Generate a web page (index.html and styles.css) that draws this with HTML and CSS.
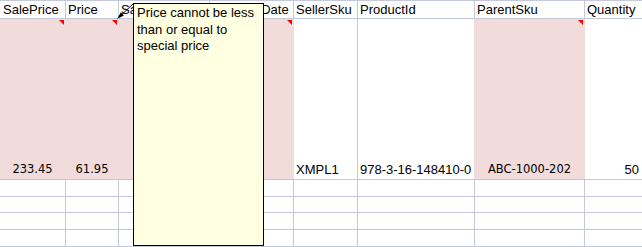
FILE: index.html
```html
<!DOCTYPE html>
<html>
<head>
<meta charset="utf-8">
<link rel="stylesheet" href="styles.css">
</head>
<body>
<div class="sheet">
  <div class="grid">
    <div class="c h first">SalePrice</div>
    <div class="c h">Price</div>
    <div class="c h">SaleStartDate</div>
    <div class="c h">SaleEndDate</div>
    <div class="c h">SellerSku</div>
    <div class="c h">ProductId</div>
    <div class="c h">ParentSku</div>
    <div class="c h">Quantity</div>

    <div class="c d pink center tahoma note">233.45</div>
    <div class="c d pink center tahoma note">61.95</div>
    <div class="c d pink"></div>
    <div class="c d pink note"></div>
    <div class="c d">XMPL1</div>
    <div class="c d">978-3-16-148410-0</div>
    <div class="c d pink center tahoma note">ABC-1000-202</div>
    <div class="c d right">50</div>

    <div class="c"></div><div class="c"></div><div class="c"></div><div class="c"></div><div class="c"></div><div class="c"></div><div class="c"></div><div class="c"></div>
    <div class="c"></div><div class="c"></div><div class="c"></div><div class="c"></div><div class="c"></div><div class="c"></div><div class="c"></div><div class="c"></div>
    <div class="c"></div><div class="c"></div><div class="c"></div><div class="c"></div><div class="c"></div><div class="c"></div><div class="c"></div><div class="c"></div>
    <div class="c"></div><div class="c"></div><div class="c"></div><div class="c"></div><div class="c"></div><div class="c"></div><div class="c"></div><div class="c"></div>
  </div>

  <svg class="arrow" width="20" height="20" viewBox="0 0 20 20">
    <line x1="17" y1="1" x2="4.5" y2="12.8" stroke="#000" stroke-width="1"/>
    <polygon points="1,16 7.9,12.4 4.9,9.2" fill="#000"/>
  </svg>

  <div class="comment">Price cannot be less than or equal to special price</div>
</div>
</body>
</html>
```

FILE: styles.css
```css
html, body {
  margin: 0;
  padding: 0;
  background: #ffffff;
  overflow: hidden;
}

.sheet {
  position: relative;
  width: 642px;
  height: 247px;
  overflow: hidden;
}

.grid {
  display: grid;
  grid-template-columns: 65px 52px 90px 83px 63px 116px 109px 1fr;
  grid-template-rows: 17px 160px 16px 15px 16px 16px;
  gap: 1px;
  padding-top: 1px;
  padding-bottom: 1px;
  background: #c3c8db;
  width: 642px;
  font-family: "Liberation Sans", Arial, sans-serif;
  font-size: 13px;
  color: #000;
}

.c {
  background: #ffffff;
  position: relative;
  white-space: nowrap;
  overflow: hidden;
  padding: 0 2px;
}

.h {
  line-height: 17px;
}

.first {
  padding-left: 3px;
}

.d {
  display: flex;
  align-items: flex-end;
  line-height: 15px;
  padding-bottom: 2px;
  overflow: visible;
}

.pink {
  background: #f2dcdb;
  margin: 0 -1px;
  padding-left: 3px;
  padding-right: 3px;
}

.center {
  justify-content: center;
}

.right {
  justify-content: flex-end;
  padding-right: 3px;
}

.tahoma {
  font-family: "DejaVu Sans", Verdana, sans-serif;
  font-size: 11.5px;
  line-height: 13px;
  padding-bottom: 3px;
}

.note::after {
  content: "";
  position: absolute;
  top: 1px;
  right: 2px;
  width: 0;
  height: 0;
  border-top: 5px solid #ff0000;
  border-left: 5px solid transparent;
}

.arrow {
  position: absolute;
  left: 116px;
  top: 3px;
}

.comment {
  position: absolute;
  left: 133px;
  top: 3px;
  width: 124px;
  height: 240px;
  background: #ffffe1;
  border: 1px solid #000;
  padding: 1px 2px 0 3px;
  font-family: "Liberation Sans", Arial, sans-serif;
  font-size: 13px;
  line-height: 16.5px;
  color: #000;
}
```
